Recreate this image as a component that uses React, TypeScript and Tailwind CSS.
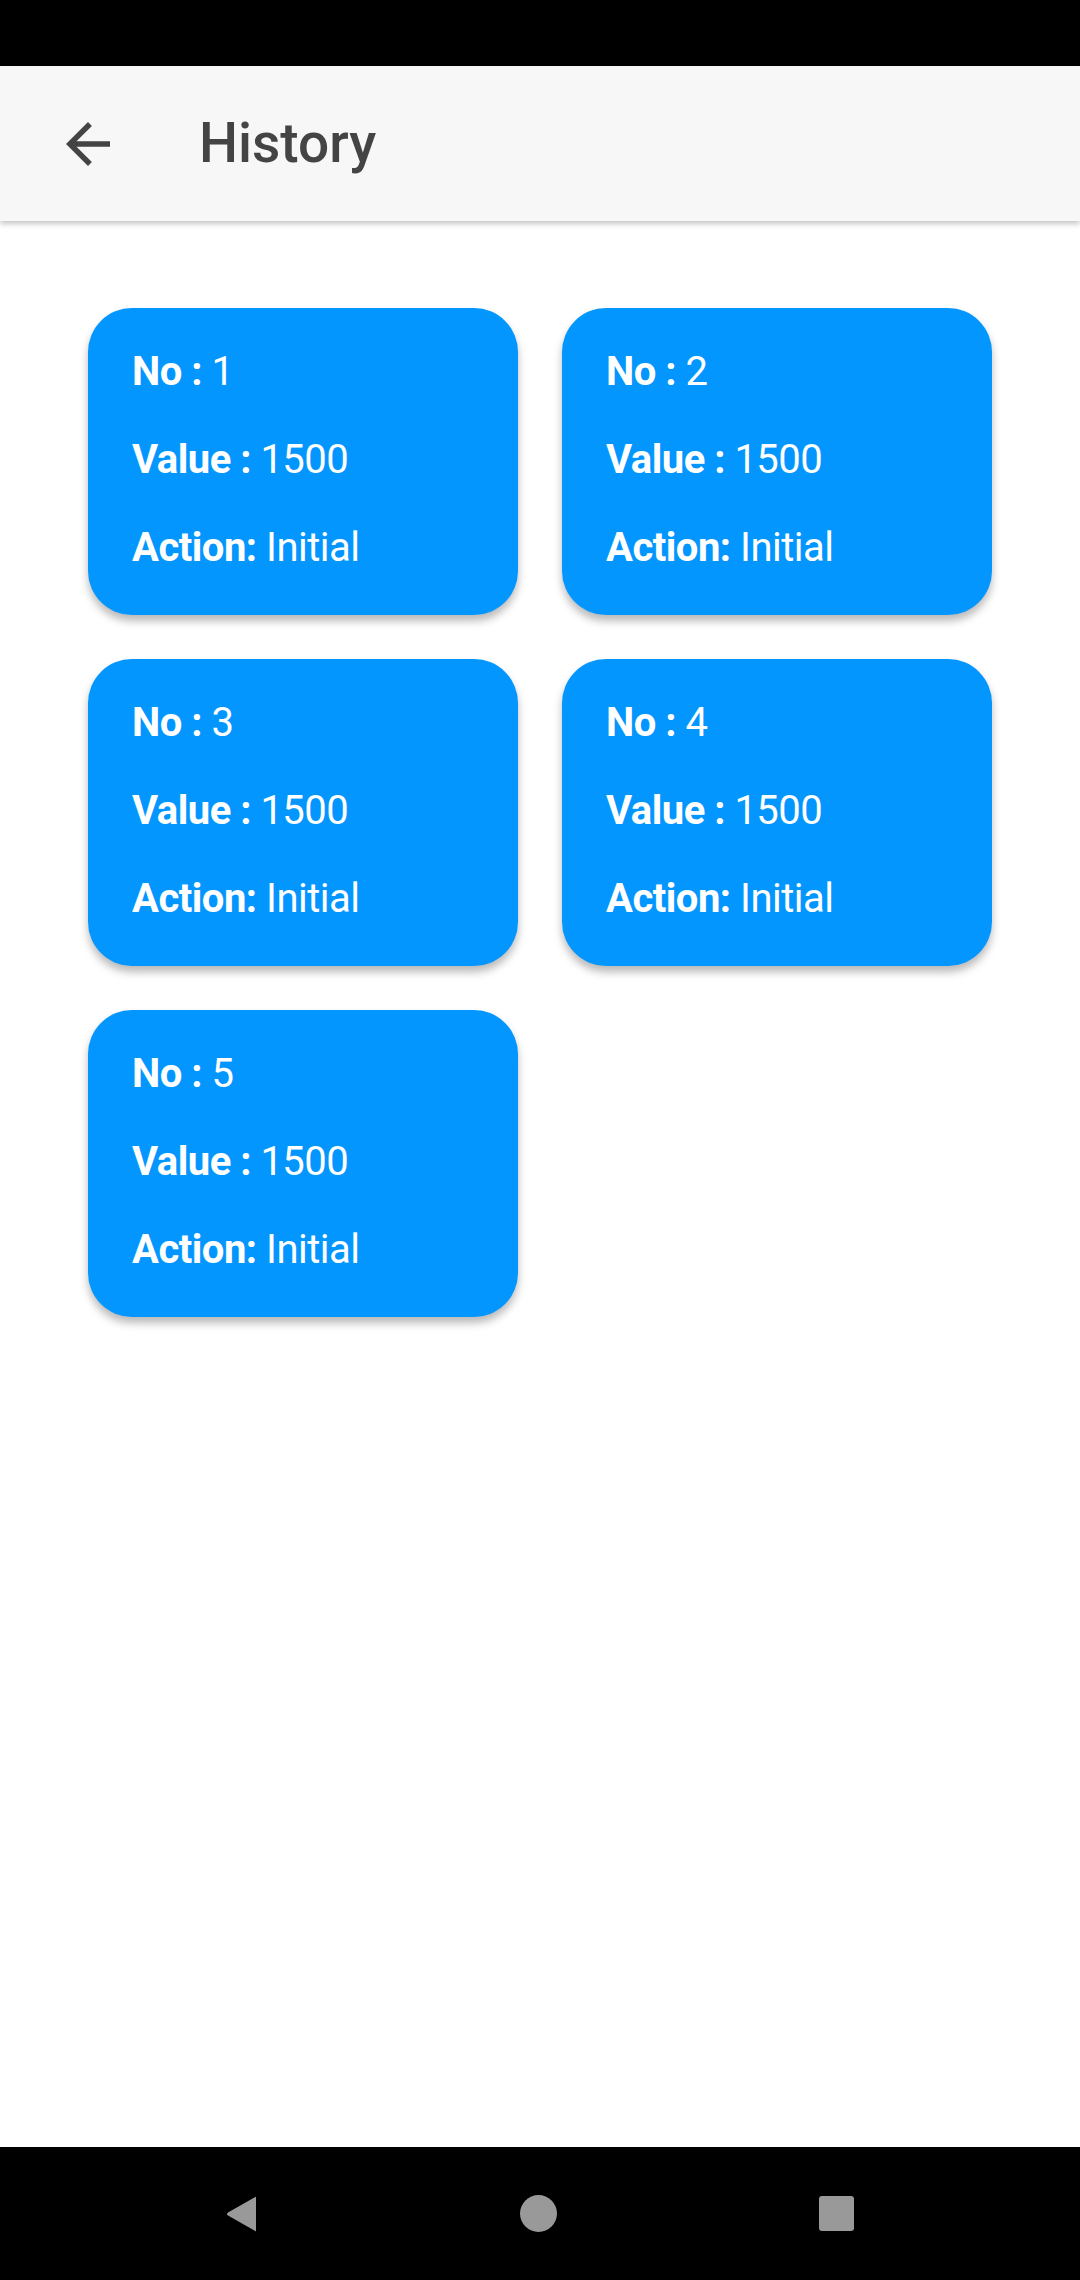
const records = [
  { no: 1, value: 1500, action: "Initial" },
  { no: 2, value: 1500, action: "Initial" },
  { no: 3, value: 1500, action: "Initial" },
  { no: 4, value: 1500, action: "Initial" },
  { no: 5, value: 1500, action: "Initial" },
];

function HistoryCard({ no, value, action }: { no: number; value: number; action: string }) {
  return (
    <div className="h-[307px] rounded-[44px] bg-[#0396ff] pl-[44px] pt-[40px] text-[40px] leading-[48px] tracking-[-0.5px] text-white shadow-[0_6px_8px_rgba(0,0,0,0.28)]">
      <div className="flex flex-col gap-[40px]">
        <p>
          <span className="font-bold">No :</span> {no}
        </p>
        <p>
          <span className="font-bold">Value :</span> {value}
        </p>
        <p>
          <span className="font-bold">Action:</span> {action}
        </p>
      </div>
    </div>
  );
}

export default function App() {
  return (
    <div className="flex h-[2280px] w-[1080px] flex-col bg-white font-['Roboto','Liberation_Sans',sans-serif]">
      {/* status bar */}
      <div className="h-[66px] shrink-0 bg-black" />

      {/* app bar */}
      <header className="relative z-10 flex h-[155px] shrink-0 items-center bg-[#f7f7f7] shadow-[0_3px_5px_rgba(0,0,0,0.22)]">
        <div className="ml-[55px] flex h-[66px] w-[66px] items-center justify-center">
          <svg viewBox="0 0 24 24" className="h-[66px] w-[66px]" fill="#444444">
            <path d="M20 11H7.83l5.59-5.59L12 4l-8 8 8 8 1.41-1.41L7.83 13H20v-2z" />
          </svg>
        </div>
        <h1 className="ml-[78px] text-[55px] font-medium text-[#444444]">History</h1>
      </header>

      {/* list */}
      <main className="flex-1">
        <div className="grid grid-cols-2 gap-x-[44px] gap-y-[44px] px-[88px] pt-[87px]">
          {records.map((r) => (
            <HistoryCard key={r.no} {...r} />
          ))}
        </div>
      </main>

      {/* navigation bar */}
      <nav className="flex h-[133px] shrink-0 items-center justify-center gap-[262px] bg-black">
        <svg viewBox="0 0 32 36" className="h-[36px] w-[32px]">
          <path
            d="M30 1.5 L30 34.5 Q30 36 28.8 34.8 L2 19.6 Q0 18 2 16.4 L28.8 1.2 Q30 0 30 1.5 Z"
            fill="#999999"
          />
        </svg>
        <div className="h-[37px] w-[37px] rounded-full bg-[#999999]" />
        <div className="h-[35px] w-[35px] rounded-[3px] bg-[#999999]" />
      </nav>
    </div>
  );
}
